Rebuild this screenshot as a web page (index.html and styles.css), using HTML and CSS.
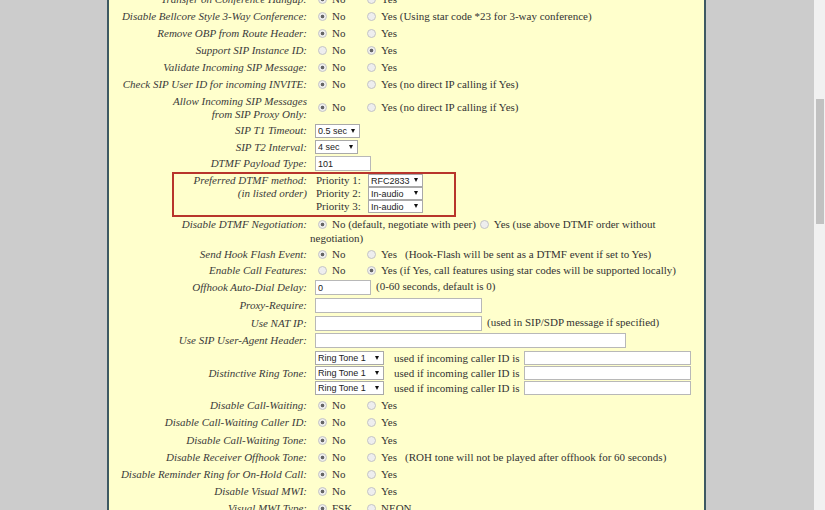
FILE: index.html
```html
<!DOCTYPE html>
<html>
<head>
<meta charset="utf-8">
<title>Account SIP Settings</title>
<link rel="stylesheet" href="styles.css">
</head>
<body>
<div class="gutter gutter-left"></div>
<div class="panel">
  <table class="cfg">
    <tr class="h17"><td class="lbl">Transfer on Conference Hangup:</td><td class="val"><span class="opt1"><input type="radio" class="rb" name="r0" checked>No</span><input type="radio" class="rb" name="r0">Yes</td></tr>
    <tr class="h17"><td class="lbl">Disable Bellcore Style 3-Way Conference:</td><td class="val"><span class="opt1"><input type="radio" class="rb" name="r1" checked>No</span><input type="radio" class="rb" name="r1">Yes (Using star code *23 for 3-way conference)</td></tr>
    <tr class="h17"><td class="lbl">Remove OBP from Route Header:</td><td class="val"><span class="opt1"><input type="radio" class="rb" name="r2" checked>No</span><input type="radio" class="rb" name="r2">Yes</td></tr>
    <tr class="h17"><td class="lbl">Support SIP Instance ID:</td><td class="val"><span class="opt1"><input type="radio" class="rb" name="r3">No</span><input type="radio" class="rb" name="r3" checked>Yes</td></tr>
    <tr class="h17"><td class="lbl">Validate Incoming SIP Message:</td><td class="val"><span class="opt1"><input type="radio" class="rb" name="r4" checked>No</span><input type="radio" class="rb" name="r4">Yes</td></tr>
    <tr class="h17"><td class="lbl">Check SIP User ID for incoming INVITE:</td><td class="val"><span class="opt1"><input type="radio" class="rb" name="r5" checked>No</span><input type="radio" class="rb" name="r5">Yes (no direct IP calling if Yes)</td></tr>
    <tr class="h29"><td class="lbl">Allow Incoming SIP Messages<br>from SIP Proxy Only:</td><td class="val"><span class="opt1"><input type="radio" class="rb" name="r6" checked>No</span><input type="radio" class="rb" name="r6">Yes (no direct IP calling if Yes)</td></tr>
    <tr class="h17"><td class="lbl">SIP T1 Timeout:</td><td class="val"><span class="sel w45"><select><option>0.5 sec</option></select></span></td></tr>
    <tr class="h16"><td class="lbl">SIP T2 Interval:</td><td class="val"><span class="sel w43"><select><option>4 sec</option></select></span></td></tr>
    <tr class="h17"><td class="lbl">DTMF Payload Type:</td><td class="val"><input type="text" class="txt w56" value="101"></td></tr>
    <tr class="h44 top"><td class="lbl">Preferred DTMF method:<br>(in listed order)</td><td class="val">
      <div class="prio"><span class="prio-l">Priority 1:</span><span class="sel sm w55"><select><option>RFC2833</option></select></span></div>
      <div class="prio"><span class="prio-l">Priority 2:</span><span class="sel sm w55"><select><option>In-audio</option></select></span></div>
      <div class="prio"><span class="prio-l">Priority 3:</span><span class="sel sm w55"><select><option>In-audio</option></select></span></div>
    </td></tr>
    <tr class="h30 top wrap"><td class="lbl">Disable DTMF Negotiation:</td><td class="val"><span class="opt1"><input type="radio" class="rb" name="r11" checked>No (default, negotiate with peer)</span><input type="radio" class="rb tight" name="r11">Yes (use above DTMF order without negotiation)</td></tr>
    <tr class="h16"><td class="lbl">Send Hook Flash Event:</td><td class="val"><span class="opt1"><input type="radio" class="rb" name="r12" checked>No</span><input type="radio" class="rb" name="r12">Yes<span class="note">(Hook-Flash will be sent as a DTMF event if set to Yes)</span></td></tr>
    <tr class="h17"><td class="lbl">Enable Call Features:</td><td class="val"><span class="opt1"><input type="radio" class="rb" name="r13">No</span><input type="radio" class="rb" name="r13" checked>Yes (if Yes, call features using star codes will be supported locally)</td></tr>
    <tr class="h17"><td class="lbl">Offhook Auto-Dial Delay:</td><td class="val"><input type="text" class="txt w56" value="0"><span class="after">(0-60 seconds, default is 0)</span></td></tr>
    <tr class="h18"><td class="lbl">Proxy-Require:</td><td class="val"><input type="text" class="txt w167"></td></tr>
    <tr class="h18"><td class="lbl">Use NAT IP:</td><td class="val"><input type="text" class="txt w167"><span class="after">(used in SIP/SDP message if specified)</span></td></tr>
    <tr class="h17"><td class="lbl">Use SIP User-Agent Header:</td><td class="val"><input type="text" class="txt w311"></td></tr>
    <tr class="h48"><td class="lbl">Distinctive Ring Tone:</td><td class="val">
      <div class="rt"><span class="sel w69"><select><option>Ring Tone 1</option></select></span><span class="used">used if incoming caller ID is</span><input type="text" class="txt w167 ml4"></div>
      <div class="rt"><span class="sel w69"><select><option>Ring Tone 1</option></select></span><span class="used">used if incoming caller ID is</span><input type="text" class="txt w167 ml4"></div>
      <div class="rt"><span class="sel w69"><select><option>Ring Tone 1</option></select></span><span class="used">used if incoming caller ID is</span><input type="text" class="txt w167 ml4"></div>
    </td></tr>
    <tr class="h17"><td class="lbl">Disable Call-Waiting:</td><td class="val"><span class="opt1"><input type="radio" class="rb" name="r19" checked>No</span><input type="radio" class="rb" name="r19">Yes</td></tr>
    <tr class="h17"><td class="lbl">Disable Call-Waiting Caller ID:</td><td class="val"><span class="opt1"><input type="radio" class="rb" name="r20" checked>No</span><input type="radio" class="rb" name="r20">Yes</td></tr>
    <tr class="h18"><td class="lbl">Disable Call-Waiting Tone:</td><td class="val"><span class="opt1"><input type="radio" class="rb" name="r21" checked>No</span><input type="radio" class="rb" name="r21">Yes</td></tr>
    <tr class="h17"><td class="lbl">Disable Receiver Offhook Tone:</td><td class="val"><span class="opt1"><input type="radio" class="rb" name="r22" checked>No</span><input type="radio" class="rb" name="r22">Yes<span class="note">(ROH tone will not be played after offhook for 60 seconds)</span></td></tr>
    <tr class="h17"><td class="lbl">Disable Reminder Ring for On-Hold Call:</td><td class="val"><span class="opt1"><input type="radio" class="rb" name="r23" checked>No</span><input type="radio" class="rb" name="r23">Yes</td></tr>
    <tr class="h17"><td class="lbl">Disable Visual MWI:</td><td class="val"><span class="opt1"><input type="radio" class="rb" name="r24" checked>No</span><input type="radio" class="rb" name="r24">Yes</td></tr>
    <tr class="h17"><td class="lbl">Visual MWI Type:</td><td class="val"><span class="opt1"><input type="radio" class="rb" name="r25" checked>FSK</span><input type="radio" class="rb" name="r25">NEON</td></tr>
  </table>
  <div class="mark"></div>
</div>
<div class="gutter gutter-right"></div>
<div class="scrollbar"><div class="thumb"></div></div>
</body>
</html>
```
FILE: styles.css
```css
* { box-sizing: border-box; }
html, body { margin: 0; padding: 0; }
body {
  display: flex;
  height: 510px;
  overflow: hidden;
  background: #cccccc;
  font-family: "Liberation Serif", "Times New Roman", serif;
  font-size: 11px;
  color: #333;
}
.gutter { background: #cccccc; }
.gutter-left { width: 107px; flex: none; }
.gutter-right { flex: 1; }
.panel {
  width: 599px;
  flex: none;
  position: relative;
  overflow: hidden;
  background: #ffffcc;
  border-left: 2px solid #3e5963;
  border-right: 2px solid #3e5963;
}
.scrollbar {
  width: 11px;
  flex: none;
  background: #f1f1f1;
  padding: 99px 1px 0 2px;
}
.thumb { height: 125px; background: #c1c1c1; }

.cfg {
  border-collapse: collapse;
  margin-top: -9px;
  width: 100%;
  line-height: 13px;
}
.cfg td { padding: 0; vertical-align: middle; white-space: nowrap; }
.cfg .lbl {
  width: 199px;
  text-align: right;
  font-style: italic;
  padding-right: 1px;
  color: #3a3a3a;
}
.cfg .val { padding-left: 2px; }
.h16 > td { height: 16px; }
.h17 > td { height: 17px; }
.h18 > td { height: 18px; }
.h29 > td { height: 29px; }
.h30 > td { height: 30px; }
.h44 > td { height: 44px; }
.h48 > td { height: 48px; }
.top > td { vertical-align: top; padding-top: 2px; }
.wrap > td { line-height: 14px; padding-top: 1px; }
.cfg .wrap > .val { white-space: normal; }

.opt1 { display: inline-block; min-width: 49px; white-space: nowrap; }
.rb {
  -webkit-appearance: none;
  appearance: none;
  width: 9px;
  height: 9px;
  margin: 0 5px 0 8px;
  border: 1px solid #c4c4c4;
  border-radius: 50%;
  background: #eeeeee;
  vertical-align: -1px;
}
.rb:checked { background: radial-gradient(circle, #666 0, #666 1.4px, #eeeeee 2.2px); }
.rb.tight { margin-left: 4px; }
.note { margin-left: 8px; }
.after { margin-left: 5px; }

.sel {
  display: inline-block;
  position: relative;
  margin-left: 5px;
  vertical-align: middle;
}
.sel select {
  -webkit-appearance: none;
  appearance: none;
  display: block;
  width: 100%;
  height: 14px;
  margin: 0;
  border: 1px solid #a9a9a9;
  border-radius: 0;
  background: #fff;
  font: 9px "Liberation Sans", Arial, sans-serif;
  color: #222;
  padding: 0 0 0 2px;
}
.sel::after {
  content: "";
  position: absolute;
  right: 5px;
  top: 5px;
  border-left: 2.5px solid transparent;
  border-right: 2.5px solid transparent;
  border-top: 4px solid #111;
}
.sel.sm select { height: 13px; }
.sel.sm::after { top: 4px; }
.w43 { width: 43px; }
.w45 { width: 45px; }
.w55 { width: 55px; }
.w69 { width: 69px; }

.txt {
  height: 15px;
  margin: 0 0 0 5px;
  padding: 0 2px;
  border: 1px solid #b8b8b8;
  border-radius: 0;
  background: #fff;
  font: 9px "Liberation Sans", Arial, sans-serif;
  color: #222;
  vertical-align: middle;
}
.w56 { width: 56px; }
.w167 { width: 167px; }
.w311 { width: 311px; }
.ml4 { margin-left: 4px; }

.prio { display: flex; align-items: center; height: 13px; }
.prio-l { width: 58px; padding-left: 6px; }
.prio .sel { margin-left: 0; }

.rt { display: flex; align-items: center; height: 15px; }
.used { margin-left: 10px; }
.rt .txt { height: 14px; }

.mark {
  position: absolute;
  left: 63px;
  top: 172px;
  width: 284px;
  height: 45px;
  border: 2px solid #b8352c;
  pointer-events: none;
}
```
